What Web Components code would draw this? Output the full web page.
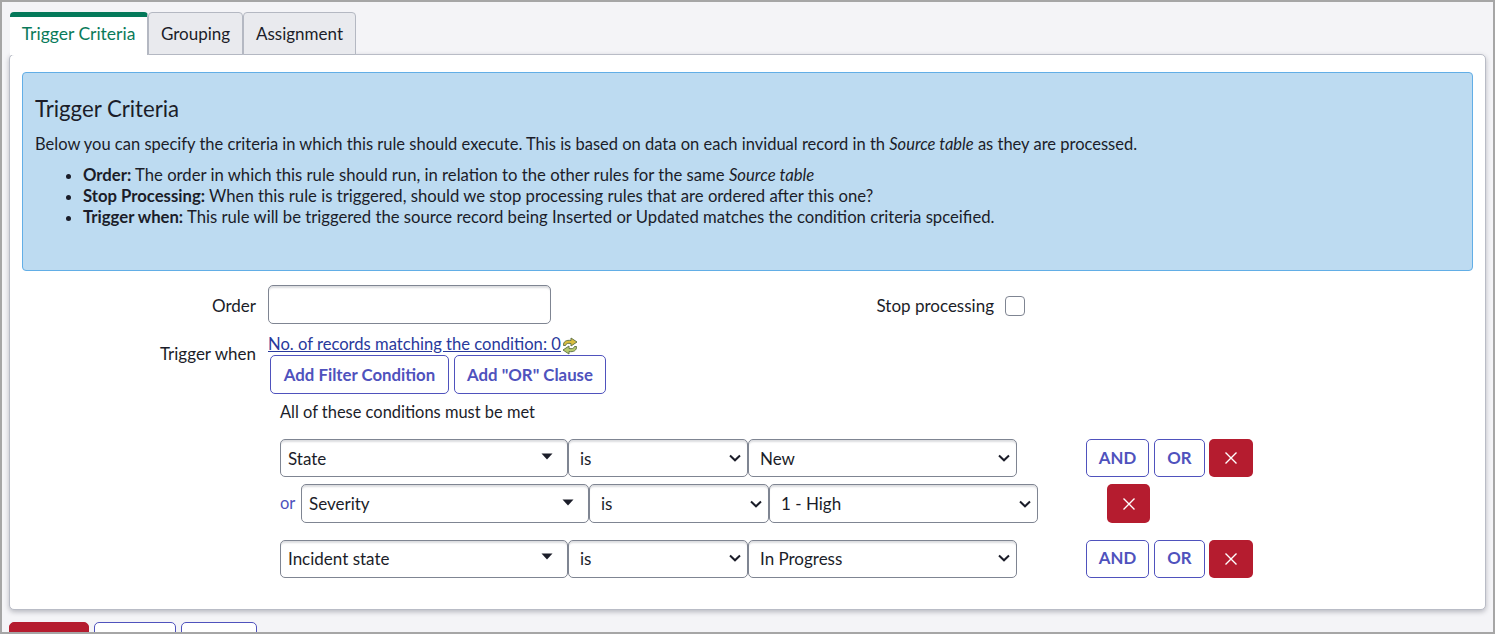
<!DOCTYPE html>
<html>
<head>
<meta charset="utf-8">
<title>Trigger Criteria</title>
<style>
  html, body { margin: 0; padding: 0; }
  body {
    width: 1495px;
    height: 634px;
    overflow: hidden;
    font-family: Lato, "Liberation Sans", sans-serif;
    font-size: 16.5px;
    color: #1b1d29;
    background: #f4f4f7;
  }
</style>
</head>
<body>
<rule-screen>
  <tab-strip slot="tabs">
    <tab-item active style="width:138px">Trigger Criteria</tab-item>
    <tab-item style="width:95px">Grouping</tab-item>
    <tab-item style="width:113px">Assignment</tab-item>
  </tab-strip>
  <rule-panel slot="panel">
    <info-box>
      <span slot="title">Trigger Criteria</span>
      <span slot="intro">Below you can specify the criteria in which this rule should execute. This is based on data on each invidual record in th <em>Source table</em> as they are processed.</span>
      <li><b>Order:</b> The order in which this rule should run, in relation to the other rules for the same <em>Source table</em></li>
      <li><b>Stop Processing:</b> When this rule is triggered, should we stop processing rules that are ordered after this one?</li>
      <li><b>Trigger when:</b> This rule will be triggered the source record being Inserted or Updated matches the condition criteria spceified.</li>
    </info-box>
    <order-row></order-row>
    <trigger-block>
      <filter-row>
        <pick-box kind="ref" style="width:288px">State</pick-box>
        <pick-box style="width:180px">is</pick-box>
        <pick-box style="width:269px">New</pick-box>
        <action-btn slot="actions" style="width:63px;margin-right:5px;padding-bottom:2px">AND</action-btn>
        <action-btn slot="actions" style="width:51px;margin-right:4px;padding-bottom:2px">OR</action-btn>
        <delete-btn slot="actions" style="width:44px"></delete-btn>
      </filter-row>
      <filter-row or style="margin-top:7px;height:39px">
        <pick-box kind="ref" style="width:288px">Severity</pick-box>
        <pick-box style="width:180px">is</pick-box>
        <pick-box style="width:269px">1 - High</pick-box>
        <delete-btn slot="actions" style="width:43px"></delete-btn>
      </filter-row>
      <filter-row style="margin-top:17px">
        <pick-box kind="ref" style="width:288px;padding-bottom:2px">Incident state</pick-box>
        <pick-box style="width:180px;padding-bottom:2px">is</pick-box>
        <pick-box style="width:269px;padding-bottom:2px">In Progress</pick-box>
        <action-btn slot="actions" style="width:63px;margin-right:5px;padding-bottom:3px">AND</action-btn>
        <action-btn slot="actions" style="width:51px;margin-right:4px;padding-bottom:3px">OR</action-btn>
        <delete-btn slot="actions" style="width:44px"></delete-btn>
      </filter-row>
    </trigger-block>
  </rule-panel>
  <footer-btns slot="footer"></footer-btns>
</rule-screen>

<script>
function makeEl(name, html) {
  customElements.define(name, class extends HTMLElement {
    constructor() {
      super();
      const template = document.createElement('template');
      template.innerHTML = html;
      this.attachShadow({ mode: 'open' }).appendChild(template.content.cloneNode(true));
    }
  });
}

const closeIcon = `<svg width="14" height="14" viewBox="0 0 14 14"><path d="M1.5 1.5L12.5 12.5M12.5 1.5L1.5 12.5" stroke="#fff" stroke-width="1.4" fill="none"/></svg>`;

makeEl('rule-screen', `
  <style>
    :host {
      display: block;
      box-sizing: border-box;
      width: 1495px;
      height: 634px;
      border: 2px solid #a6a6a6;
      padding: 10px 7px 0;
      overflow: hidden;
    }
  </style>
  <slot name="tabs"></slot>
  <slot name="panel"></slot>
  <slot name="footer"></slot>
`);

makeEl('tab-strip', `
  <style>
    :host { display: flex; padding-left: 1px; position: relative; z-index: 1; height: 43px; }
  </style>
  <slot></slot>
`);

makeEl('tab-item', `
  <style>
    :host {
      display: flex;
      box-sizing: border-box;
      align-items: center;
      justify-content: center;
      height: 43px;
      padding-bottom: 1px;
      background: #e9eaee;
      border: 1px solid #b4b8c2;
      border-radius: 4px 4px 0 0;
      font-size: 17px;
      color: #1b1d29;
    }
    :host([active]) {
      background: #fff;
      color: #0a7a5a;
      border: 0;
      border-top: 5px solid #04795a;
      border-right: 1px solid #b4b8c2;
      padding-bottom: 6px;
      font-size: 17.5px;
    }
  </style>
  <slot></slot>
`);

makeEl('rule-panel', `
  <style>
    :host {
      display: block;
      box-sizing: border-box;
      height: 556px;
      margin-top: -1px;
      padding: 17px 12px 0;
      background: #fff;
      border: 1px solid #b9bcc6;
      border-radius: 5px;
      box-shadow: 0 2px 5px rgba(30, 32, 50, .28);
    }
  </style>
  <slot></slot>
`);

makeEl('info-box', `
  <style>
    :host {
      display: block;
      box-sizing: border-box;
      height: 199px;
      padding: 24px 12px 0;
      background: #bddbf1;
      border: 1px solid #62aee6;
      border-radius: 4px;
      line-height: 22px;
    }
    .title { font-size: 22.2px; line-height: 24px; margin-bottom: 12px; }
    .intro { margin-bottom: 10px; font-size: 16.5px; }
    ul { margin: 0; padding-left: 48px; line-height: 21px; font-size: 16.7px; }
    ::slotted(li) { line-height: 21px; }
  </style>
  <div class="title"><slot name="title"></slot></div>
  <div class="intro"><slot name="intro"></slot></div>
  <ul><slot></slot></ul>
`);

makeEl('order-row', `
  <style>
    :host {
      display: grid;
      grid-template-columns: 246px 283px 454px 20px;
      align-items: center;
      height: 39px;
      margin-top: 14px;
      font-size: 17px;
    }
    .lab { text-align: right; padding-top: 2px; }
    .lab.first { padding-right: 12px; }
    .stop { padding-right: 11px; }
    input {
      box-sizing: border-box;
      width: 283px;
      height: 39px;
      margin: 0;
      border: 1px solid #7f8592;
      border-radius: 5px;
      box-shadow: inset 0 3px 2px -1px #dcdde0;
      background: #fff;
      outline: none;
    }
    .check {
      width: 20px;
      height: 20px;
      box-sizing: border-box;
      border: 1px solid #7f8592;
      border-radius: 4px;
      background: #fff;
      margin-top: 2px;
    }
  </style>
  <div class="lab first">Order</div>
  <input type="text">
  <div class="lab stop">Stop processing</div>
  <div class="check"></div>
`);

makeEl('trigger-block', `
  <style>
    :host {
      display: grid;
      grid-template-columns: 246px 1fr;
      margin-top: 10px;
    }
    .lab { text-align: right; padding: 10px 12px 0 0; line-height: 20px; font-size: 17px; }
    .count { display: flex; align-items: flex-start; height: 20px; line-height: 20px; font-size: 16.6px; }
    a { color: #29399c; text-decoration: underline; }
    svg { margin: 3px 0 0 1px; flex: none; }
    .btns { display: flex; gap: 5px; padding: 1px 0 0 2px; font-size: 16.8px; }
    .msg { padding: 8px 0 0 12px; line-height: 20px; height: 46px; box-sizing: border-box; font-size: 16.45px; }
    .rows { display: block; margin: -1px 0 0 12px; }
  </style>
  <div class="lab">Trigger when</div>
  <div>
    <div class="count">
      <a>No. of records matching the condition: 0</a>
      <svg width="16" height="18" viewBox="0 0 16 18">
        <path d="M1.500 8.500C1.200 4.500 4.500 2.700 9 3.500V1L15 5 9 9V6.500C6 6 4 6.500 3.500 8.500Z" fill="#d9bd3e" stroke="#66784a" stroke-width="1"/>
        <path d="M14.500 9.500C14.800 13.500 11.500 15.300 7 14.500V17L1 13 7 9V11.500C10 12 12 11.500 12.500 9.500Z" fill="#b5c96f" stroke="#66784a" stroke-width="1"/>
      </svg>
    </div>
    <div class="btns">
      <action-btn style="width:179px;height:39px;font-size:16.8px;padding-bottom:1px">Add Filter Condition</action-btn>
      <action-btn style="width:152px;height:39px;font-size:16.8px;padding-bottom:1px">Add "OR" Clause</action-btn>
    </div>
    <div class="msg">All of these conditions must be met</div>
    <div class="rows"><slot></slot></div>
  </div>
`);

customElements.define('filter-row', class extends HTMLElement {
  constructor() {
    super();
    const template = document.createElement('template');
    template.innerHTML = `
      <style>
        :host { display: flex; align-items: stretch; height: 38px; font-size: 17px; }
        .or { display: none; width: 21px; color: #4f52bd; line-height: 38px; font-size: 16.5px; }
        :host([or]) .or { display: block; }
        .gap { width: 69px; flex: none; }
        .acts { display: flex; }
      </style>
      <span class="or">or</span>
      <slot></slot>
      <div class="gap"></div>
      <div class="acts"><slot name="actions"></slot></div>
    `;
    this.attachShadow({ mode: 'open' }).appendChild(template.content.cloneNode(true));
  }
});

customElements.define('pick-box', class extends HTMLElement {
  constructor() {
    super();
    const isRef = this.getAttribute('kind') === 'ref';
    const arrow = isRef
      ? `<svg width="12" height="7" viewBox="0 0 12 7"><path d="M0.500 0.500H11.500L6 6.500Z" fill="#1b1d29"/></svg>`
      : `<svg width="12" height="8" viewBox="0 0 12 8"><path d="M1 1.500L6 6.300 11 1.500" fill="none" stroke="#1b1d29" stroke-width="2"/></svg>`;
    const template = document.createElement('template');
    template.innerHTML = `
      <style>
        :host {
          display: flex;
          flex: none;
          align-items: center;
          justify-content: space-between;
          box-sizing: border-box;
          padding: 0 ${isRef ? 14 : 6}px 0 ${isRef ? 7 : 11}px;
          background: #fff;
          border: 1px solid #7f8592;
          border-radius: 5px;
          box-shadow: inset 0 3px 2px -1px #dcdde0;
        }
        svg { flex: none; margin-top: ${isRef ? -3 : 0}px; }
      </style>
      <span><slot></slot></span>
      ${arrow}
    `;
    this.attachShadow({ mode: 'open' }).appendChild(template.content.cloneNode(true));
  }
});

makeEl('action-btn', `
  <style>
    :host {
      display: flex;
      flex: none;
      box-sizing: border-box;
      align-items: center;
      justify-content: center;
      background: #fff;
      border: 1px solid #4f52bd;
      border-radius: 5px;
      color: #4f52bd;
      font-weight: 700;
      font-size: 16.8px;
    }
  </style>
  <slot></slot>
`);

makeEl('delete-btn', `
  <style>
    :host {
      display: flex;
      flex: none;
      box-sizing: border-box;
      align-items: center;
      justify-content: center;
      background: #b51c2f;
      border-radius: 5px;
    }
  </style>
  ${closeIcon}
`);

makeEl('footer-btns', `
  <style>
    :host { display: flex; margin-top: 12px; }
    div { box-sizing: border-box; height: 30px; border-radius: 5px; background: #fff; border: 1px solid #4f52bd; }
    .red { background: #b51c2f; border-color: #b51c2f; width: 80px; margin-right: 5px; }
    .a { width: 82px; margin-right: 5px; }
    .b { width: 76px; }
  </style>
  <div class="red"></div><div class="a"></div><div class="b"></div>
`);
</script>
</body>
</html>
